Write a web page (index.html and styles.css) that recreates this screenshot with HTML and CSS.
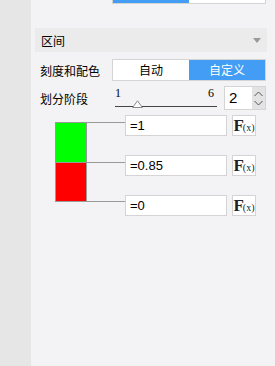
FILE: index.html
```html
<!DOCTYPE html>
<html lang="zh-CN">
<head>
  <meta charset="UTF-8">
  <title>区间</title>
  <link rel="stylesheet" href="styles.css">
</head>
<body>
  <div class="sidebar"></div>

  <div class="panel">
    <!-- tail of the control above, scrolled out of view -->
    <div class="seg seg-top">
      <span class="seg-item active"></span>
      <span class="seg-item"></span>
    </div>

    <div class="section-head">
      <span>区间</span>
      <span class="caret"></span>
    </div>

    <div class="row">
      <label class="row-label">刻度和配色</label>
      <div class="seg">
        <span class="seg-item">自动</span>
        <span class="seg-item active">自定义</span>
      </div>
    </div>

    <div class="row">
      <label class="row-label">划分阶段</label>
      <div class="slider">
        <div class="slider-ticks"><span>1</span><span>6</span></div>
        <div class="slider-track"></div>
        <svg class="slider-thumb" width="11" height="8" viewBox="0 0 11 8"><path d="M5.5 0.8 L10.3 7.5 L0.7 7.5 Z" fill="#fff" stroke="#8a8a8a" stroke-width="1"/></svg>
      </div>
      <div class="spinner">
        <span class="spinner-value">2</span>
        <div class="spinner-btns">
          <svg width="9" height="6" viewBox="0 0 9 6"><path d="M0.5 5 L4.5 1 L8.5 5" fill="none" stroke="#555" stroke-width="1"/></svg>
          <svg width="9" height="6" viewBox="0 0 9 6"><path d="M0.5 1 L4.5 5 L8.5 1" fill="none" stroke="#555" stroke-width="1"/></svg>
        </div>
      </div>
    </div>

    <div class="legend">
      <div class="scale">
        <div class="band">
          <div class="swatch green"></div>
          <div class="tick"></div>
        </div>
        <div class="band last">
          <div class="swatch red"></div>
          <div class="tick"></div>
        </div>
      </div>
      <div class="fields">
        <div class="field">
          <div class="field-input">=1</div>
          <div class="fx">F<small>(x)</small></div>
        </div>
        <div class="field">
          <div class="field-input">=0.85</div>
          <div class="fx">F<small>(x)</small></div>
        </div>
        <div class="field">
          <div class="field-input">=0</div>
          <div class="fx">F<small>(x)</small></div>
        </div>
      </div>
    </div>
  </div>
</body>
</html>
```

FILE: styles.css
```css
* {
  box-sizing: border-box;
  margin: 0;
  padding: 0;
}

body {
  font-family: "Noto Sans CJK SC", "Liberation Sans", sans-serif;
  font-size: 12px;
  color: #000;
  display: flex;
  min-height: 100vh;
  background: #f3f3f5;
}

.sidebar {
  width: 31px;
  flex-shrink: 0;
  background: #e6e6e6;
}

.panel {
  flex: 1;
  padding: 0 4px;
}

/* Segmented buttons */
.seg {
  display: flex;
  width: 154px;
  height: 22px;
  border: 1px solid #d4d4d4;
  background: #fff;
}

.seg-item {
  flex: 1;
  display: flex;
  align-items: center;
  justify-content: center;
  line-height: 1;
}

.seg-item.active {
  background: #439df5;
  color: #fff;
}

.seg-top {
  margin-left: 77px;
  height: 4px;
  border-top: none;
}

/* Section header */
.section-head {
  display: flex;
  align-items: center;
  justify-content: space-between;
  width: 232px;
  height: 24px;
  margin-top: 24px;
  padding: 0 6px;
  background: #ebebeb;
}

.caret {
  width: 0;
  height: 0;
  border-left: 4px solid transparent;
  border-right: 4px solid transparent;
  border-top: 5px solid #9a9a9a;
}

/* Rows */
.row {
  display: flex;
  align-items: center;
  padding-left: 5px;
  margin-top: 7px;
}

.row + .row {
  margin-top: 5px;
}

.row-label {
  width: 72px;
  flex-shrink: 0;
}

/* Slider */
.slider {
  position: relative;
  width: 108px;
  height: 24px;
}

.slider-ticks {
  display: flex;
  justify-content: space-between;
  padding: 0 6px 0 3px;
  font-family: "Liberation Serif", serif;
  font-size: 12px;
  line-height: 12px;
  margin-top: 1px;
}

.slider-track {
  margin: 7px 0 0 3px;
  width: 102px;
  border-top: 1px solid #444;
}

.slider-thumb {
  position: absolute;
  left: 20px;
  top: 14px;
  display: block;
}

/* Spinner */
.spinner {
  display: flex;
  margin-left: 4px;
  width: 42px;
  height: 24px;
  border: 1px solid #d4d4d4;
  background: #fff;
}

.spinner-value {
  flex: 1;
  padding-left: 4px;
  font-family: "Liberation Sans", sans-serif;
  font-size: 15px;
  line-height: 22px;
}

.spinner-btns {
  width: 13px;
  display: flex;
  flex-direction: column;
  justify-content: space-around;
  align-items: center;
  background: #e3e3e3;
  padding: 2px 0;
}

.spinner-btns svg {
  display: block;
}

/* Colour legend */
.legend {
  display: flex;
  padding-left: 20px;
  margin-top: 5px;
}

.scale {
  margin-top: 7px;
}

.band {
  display: flex;
  height: 40px;
}

.swatch {
  width: 32px;
  border: 1px solid #999;
  border-bottom: none;
}

.band.last .swatch,
.band.last .tick {
  border-bottom: 1px solid #999;
}

.green {
  background: #00ff00;
}

.red {
  background: #ff0000;
}

.tick {
  width: 38px;
  border-top: 1px solid #999;
}

.fields {
  display: flex;
  flex-direction: column;
  gap: 19px;
}

.field {
  display: flex;
  gap: 5px;
}

.field-input {
  width: 102px;
  height: 21px;
  border: 1px solid #d4d4d4;
  background: #fff;
  padding-left: 4px;
  font-family: "Liberation Sans", sans-serif;
  font-size: 13px;
  line-height: 19px;
}

.fx {
  width: 24px;
  height: 21px;
  border: 1px solid #d4d4d4;
  background: #fff;
  font-family: "Liberation Serif", serif;
  font-weight: bold;
  font-size: 17px;
  line-height: 19px;
  text-align: center;
  color: #222;
  letter-spacing: -1px;
}

.fx small {
  font-size: 10px;
  font-weight: normal;
  letter-spacing: 0;
}
```
